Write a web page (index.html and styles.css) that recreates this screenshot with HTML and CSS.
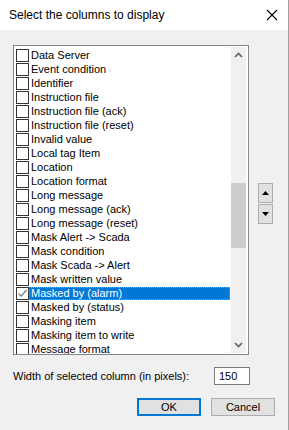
FILE: index.html
```html
<!DOCTYPE html>
<html lang="en">

<head>
    <meta charset="utf-8" />
    <title>Select the columns to display</title>
    <link rel="stylesheet" href="styles.css">
</head>

<body>
    <div class="dialog">
        <!-- Title bar -->
        <div class="titleBar">
            <span class="titleText">Select the columns to display</span>
            <svg class="closeIcon" width="12" height="12" viewBox="0 0 12 12">
                <path d="M1 1 L11 11 M11 1 L1 11" stroke="#000" stroke-width="1.1" fill="none" />
            </svg>
        </div>

        <div class="dialogBody">
            <div class="listRow">
                <!-- Liste des colonnes -->
                <div class="listBox">
                    <ul class="columnList">
                        <li><span class="check"></span><span class="label">Data Server</span></li>
                        <li><span class="check"></span><span class="label">Event condition</span></li>
                        <li><span class="check"></span><span class="label">Identifier</span></li>
                        <li><span class="check"></span><span class="label">Instruction file</span></li>
                        <li><span class="check"></span><span class="label">Instruction file (ack)</span></li>
                        <li><span class="check"></span><span class="label">Instruction file (reset)</span></li>
                        <li><span class="check"></span><span class="label">Invalid value</span></li>
                        <li><span class="check"></span><span class="label">Local tag Item</span></li>
                        <li><span class="check"></span><span class="label">Location</span></li>
                        <li><span class="check"></span><span class="label">Location format</span></li>
                        <li><span class="check"></span><span class="label">Long message</span></li>
                        <li><span class="check"></span><span class="label">Long message (ack)</span></li>
                        <li><span class="check"></span><span class="label">Long message (reset)</span></li>
                        <li><span class="check"></span><span class="label">Mask Alert -&gt; Scada</span></li>
                        <li><span class="check"></span><span class="label">Mask condition</span></li>
                        <li><span class="check"></span><span class="label">Mask Scada -&gt; Alert</span></li>
                        <li><span class="check"></span><span class="label">Mask written value</span></li>
                        <li class="selected">
                            <span class="check">
                                <svg width="11" height="11" viewBox="0 0 11 11">
                                    <path d="M1.5 5.5 L4.2 8.2 L9.5 2" stroke="#777" stroke-width="1.2" fill="none" />
                                </svg>
                            </span><span class="label">Masked by (alarm)</span>
                        </li>
                        <li><span class="check"></span><span class="label">Masked by (status)</span></li>
                        <li><span class="check"></span><span class="label">Masking item</span></li>
                        <li><span class="check"></span><span class="label">Masking item to write</span></li>
                        <li><span class="check"></span><span class="label">Message format</span></li>
                    </ul>
                    <div class="scrollBar">
                        <svg class="arrow" width="15" height="17" viewBox="0 0 15 17">
                            <path d="M4 10 L7.5 6.5 L11 10" stroke="#606060" stroke-width="1.6" fill="none" />
                        </svg>
                        <div class="track">
                            <div class="thumb"></div>
                        </div>
                        <svg class="arrow" width="15" height="17" viewBox="0 0 15 17">
                            <path d="M4 7 L7.5 10.5 L11 7" stroke="#606060" stroke-width="1.6" fill="none" />
                        </svg>
                    </div>
                </div>
                <!-- Boutons monter / descendre -->
                <div class="moveButtons">
                    <button class="moveBtn">
                        <svg width="7" height="4" viewBox="0 0 7 4"><path d="M0 4 L3.5 0 L7 4 Z" fill="#000" /></svg>
                    </button>
                    <button class="moveBtn">
                        <svg width="7" height="4" viewBox="0 0 7 4"><path d="M0 0 L3.5 4 L7 0 Z" fill="#000" /></svg>
                    </button>
                </div>
            </div>

            <div class="widthRow">
                <span>Width of selected column (in pixels):</span>
                <div class="widthInput">150</div>
            </div>

            <div class="buttonRow">
                <button class="dlgBtn defaultBtn">OK</button>
                <button class="dlgBtn">Cancel</button>
            </div>
        </div>
    </div>
</body>

</html>
```

FILE: styles.css
```css
html,
body {
    margin: 0;
    padding: 0;
}

body {
    font-family: "Liberation Sans", Arial, sans-serif;
    font-size: 11px;
    color: #000;
    background: #f0f0f0;
}

.dialog {
    width: 288px;
    height: 430px;
    background: #f0f0f0;
    border-right: 1px solid #a0a0a0;
    display: flex;
    flex-direction: column;
}

.titleBar {
    height: 30px;
    background: #fff;
    display: flex;
    align-items: center;
    justify-content: space-between;
    padding: 0 10px 0 9px;
    flex-shrink: 0;
}

.titleText {
    font-family: "Liberation Sans", Arial, sans-serif;
    font-size: 12px;
    color: #000;
}

.closeIcon {
    display: block;
}

.dialogBody {
    padding: 15px 0 0 13px;
}

.listRow {
    display: flex;
}

.listBox {
    width: 234px;
    height: 308px;
    border: 1px solid #828790;
    background: #fff;
    display: flex;
    overflow: hidden;
}

.columnList {
    list-style: none;
    margin: 0;
    padding: 3px 0 0 2px;
    flex: 1;
    overflow: hidden;
}

.columnList li {
    height: 14px;
    display: flex;
    align-items: flex-start;
}

.check {
    width: 11px;
    height: 11px;
    border: 1px solid #333;
    background: #fff;
    flex-shrink: 0;
    display: flex;
    align-items: center;
    justify-content: center;
}

.label {
    flex: 1;
    height: 13px;
    line-height: 13px;
    padding-left: 2px;
    white-space: nowrap;
}

.selected .label {
    background: #0078d7;
    color: #fff;
    outline: 1px dotted #ff8c00;
    outline-offset: -1px;
    margin-right: 1px;
}

.scrollBar {
    width: 15px;
    margin: 1px 2px 1px 0;
    background: #f0f0f0;
    display: flex;
    flex-direction: column;
}

.arrow {
    display: block;
    flex-shrink: 0;
}

.track {
    flex: 1;
    padding-top: 119px;
}

.thumb {
    height: 65px;
    background: #cdcdcd;
}

.moveButtons {
    display: flex;
    flex-direction: column;
    gap: 1px;
    margin: 138px 0 0 9px;
}

.moveBtn {
    width: 15px;
    height: 20px;
    padding: 0;
    border: 1px solid #adadad;
    background: #e1e1e1;
    display: flex;
    align-items: center;
    justify-content: center;
}

.widthRow {
    display: flex;
    align-items: center;
    margin-top: 12px;
    width: 237px;
    justify-content: space-between;
}

.widthInput {
    width: 30px;
    height: 16px;
    border: 1px solid #7a7a7a;
    background: #fff;
    padding-left: 4px;
    line-height: 16px;
}

.buttonRow {
    display: flex;
    gap: 10px;
    margin: 13px 0 0 124px;
}

.dlgBtn {
    width: 64px;
    height: 18px;
    padding: 0;
    font-family: "Liberation Sans", Arial, sans-serif;
    font-size: 11px;
    background: #e1e1e1;
    border: 1px solid #adadad;
    color: #000;
}

.defaultBtn {
    border: 2px solid #0078d7;
}
```
